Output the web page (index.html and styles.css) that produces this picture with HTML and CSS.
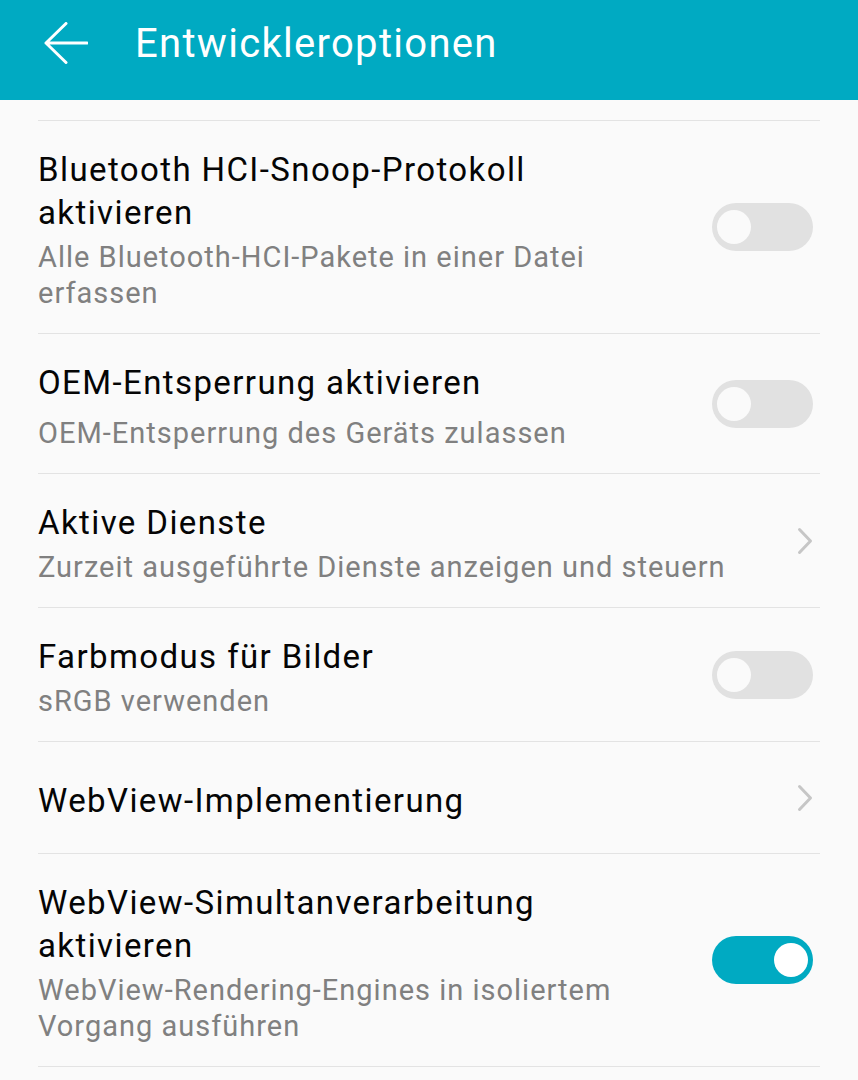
FILE: index.html
```html
<!DOCTYPE html>
<html lang="de">
<head>
  <meta charset="UTF-8" />
  <meta name="viewport" content="width=device-width, initial-scale=1" />
  <title>Entwickleroptionen</title>
  <link rel="stylesheet" href="styles.css">
</head>
<body>
  <header class="appbar">
    <svg class="back" viewBox="0 0 44 42" width="44" height="42">
      <path d="M2 21H43M22 1.5L2 21L22 40.5" />
    </svg>
    <h1>Entwickleroptionen</h1>
  </header>

  <ul class="prefs">
    <li class="pref pref-cut"></li>

    <li class="pref">
      <div class="pref-text">
        <div class="pref-title">Bluetooth HCI-Snoop-Protokoll aktivieren</div>
        <div class="pref-summary">Alle Bluetooth-HCI-Pakete in einer Datei erfassen</div>
      </div>
      <span class="switch"></span>
    </li>

    <li class="pref">
      <div class="pref-text">
        <div class="pref-title">OEM-Entsperrung aktivieren</div>
        <div class="pref-summary pref-summary-loose">OEM-Entsperrung des Geräts zulassen</div>
      </div>
      <span class="switch"></span>
    </li>

    <li class="pref">
      <div class="pref-text">
        <div class="pref-title">Aktive Dienste</div>
        <div class="pref-summary">Zurzeit ausgeführte Dienste anzeigen und steuern</div>
      </div>
      <svg class="chevron" viewBox="0 0 16 28" width="16" height="28">
        <path d="M2.5 2.5L13.5 14L2.5 25.5" />
      </svg>
    </li>

    <li class="pref">
      <div class="pref-text">
        <div class="pref-title">Farbmodus für Bilder</div>
        <div class="pref-summary">sRGB verwenden</div>
      </div>
      <span class="switch"></span>
    </li>

    <li class="pref">
      <div class="pref-text pref-text-single">
        <div class="pref-title">WebView-Implementierung</div>
      </div>
      <svg class="chevron" viewBox="0 0 16 28" width="16" height="28">
        <path d="M2.5 2.5L13.5 14L2.5 25.5" />
      </svg>
    </li>

    <li class="pref">
      <div class="pref-text">
        <div class="pref-title">WebView-Simultanverarbeitung aktivieren</div>
        <div class="pref-summary">WebView-Rendering-Engines in isoliertem Vorgang ausführen</div>
      </div>
      <span class="switch on"></span>
    </li>
  </ul>
</body>
</html>
```

FILE: styles.css
```css
body {
  margin: 0;
  background: #fafafa;
  font-family: Roboto, "Noto Sans", sans-serif;
  overflow: hidden;
}
.appbar {
  display: flex;
  align-items: center;
  height: 100px;
  box-sizing: border-box;
  padding: 0 0 14px 44px;
  background: #00aac2;
  color: #fff;
}
.back {
  flex: none;
  fill: none;
  stroke: #fff;
  stroke-width: 3;
  stroke-linecap: round;
  stroke-linejoin: round;
}
.appbar h1 {
  margin: 0 0 0 47px;
  font-size: 40px;
  font-weight: 400;
  letter-spacing: 1.3px;
}
.prefs {
  list-style: none;
  margin: 0 38px;
  padding: 0;
}
.pref {
  display: flex;
  align-items: center;
  border-bottom: 1px solid #e3e3e3;
}
.pref-cut {
  height: 20px;
}
.pref-text {
  flex: 1;
  padding: 27px 0 22px;
}
.pref-text-single {
  padding: 37px 0 31px;
}
.pref-title {
  font-size: 33px;
  line-height: 43px;
  letter-spacing: 1.4px;
  color: #050505;
}
.pref-summary {
  margin-top: 5px;
  font-size: 29px;
  line-height: 36px;
  letter-spacing: 1px;
  color: #808080;
}
.pref-summary-loose {
  margin-top: 11px;
}
.switch {
  position: relative;
  flex: none;
  width: 101px;
  height: 48px;
  margin: 0 7px 0 80px;
  border-radius: 24px;
  background: #e1e1e1;
}
.switch::after {
  content: "";
  position: absolute;
  top: 7px;
  left: 5px;
  width: 34px;
  height: 34px;
  border-radius: 50%;
  background: #fafafa;
}
.switch.on {
  background: #00aac2;
}
.switch.on::after {
  left: auto;
  right: 5px;
  background: #fff;
}
.chevron {
  flex: none;
  margin: 0 7px 0 40px;
  fill: none;
  stroke: #c6c6c6;
  stroke-width: 3;
  stroke-linecap: round;
  stroke-linejoin: round;
}
```
